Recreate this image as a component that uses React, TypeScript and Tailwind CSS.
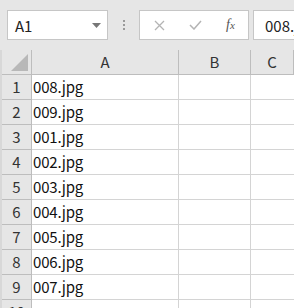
import React from 'react';

const files = ['008.jpg', '009.jpg', '001.jpg', '002.jpg', '003.jpg', '004.jpg', '005.jpg', '006.jpg', '007.jpg', ''];

const font = { fontFamily: '"Noto Sans CJK JP", "Noto Sans", sans-serif' };

export default function App() {
  return (
    <div className="w-[294px] h-[308px] overflow-hidden bg-white flex flex-col" style={font}>
      {/* formula bar */}
      <div className="h-[50px] shrink-0 bg-[#e6e6e6] flex items-start pt-[10px] pl-[7px]">
        <div className="shrink-0 w-[101px] h-[30px] bg-white border border-[#c6c6c6] flex items-center pl-[7px] pr-[6px]">
          <span className="text-[15px] text-[#222] flex-1 leading-none">A1</span>
          <svg width="9" height="5" viewBox="0 0 9 5"><path d="M0 0h9L4.5 5z" fill="#777" /></svg>
        </div>
        <div className="shrink-0 w-[31px] h-[30px] flex flex-col items-center justify-center gap-[2px]">
          <span className="w-[2px] h-[2px] bg-[#9a9a9a]" />
          <span className="w-[2px] h-[2px] bg-[#9a9a9a]" />
          <span className="w-[2px] h-[2px] bg-[#9a9a9a]" />
        </div>
        <div className="shrink-0 w-[110px] h-[30px] bg-white border border-[#c6c6c6] flex items-center">
          <div className="w-[37px] flex justify-center pl-[2px]">
            <svg width="11" height="11" viewBox="0 0 11 11"><path d="M1 1l9 9M10 1l-9 9" stroke="#b4b4b4" strokeWidth="1.3" /></svg>
          </div>
          <div className="w-[36px] flex justify-center">
            <svg width="13" height="10" viewBox="0 0 13 10"><path d="M1 5l4 4 7-8" stroke="#b4b4b4" strokeWidth="1.5" fill="none" /></svg>
          </div>
          <div className="w-[35px] flex justify-center">
            <span className="italic text-[14px] text-[#555] leading-none" style={{ fontFamily: '"Liberation Serif", serif' }}>
              f<span className="text-[11px]">x</span>
            </span>
          </div>
        </div>
        <div className="ml-[4px] flex-1 min-w-0 overflow-hidden h-[30px] bg-white border border-[#c6c6c6] border-r-0 flex items-center pl-[11px]">
          <span className="text-[15px] text-[#222] leading-none whitespace-nowrap">008.jpg</span>
        </div>
      </div>

      {/* sheet */}
      <div className="flex-1 grid grid-cols-[30px_147px_72px_1fr] auto-rows-[25px] border-l-2 border-[#d8d8d8]">
        <div className="bg-[#e6e6e6] border-r border-b border-[#bdbdbd] relative">
          <svg className="absolute right-[3px] bottom-[3px]" width="17" height="17" viewBox="0 0 17 17"><path d="M17 0V17H0z" fill="#b8b8b8" /></svg>
        </div>
        {['A', 'B', 'C'].map((c) => (
          <div key={c} className="bg-[#e6e6e6] border-r border-b border-[#bdbdbd] flex items-center justify-center text-[15px] text-[#333]">
            {c}
          </div>
        ))}
        {files.map((f, i) => (
          <React.Fragment key={i}>
            <div className="bg-[#e6e6e6] border-r border-b border-[#bdbdbd] flex items-center justify-center text-[15px] text-[#333]">
              {i + 1}
            </div>
            <div className="border-r border-b border-[#d4d4d4] flex items-center pl-[1px] text-[15px] text-[#111] tracking-[-0.2px]">{f}</div>
            <div className="border-r border-b border-[#d4d4d4]" />
            <div className="border-b border-[#d4d4d4]" />
          </React.Fragment>
        ))}
      </div>
    </div>
  );
}
